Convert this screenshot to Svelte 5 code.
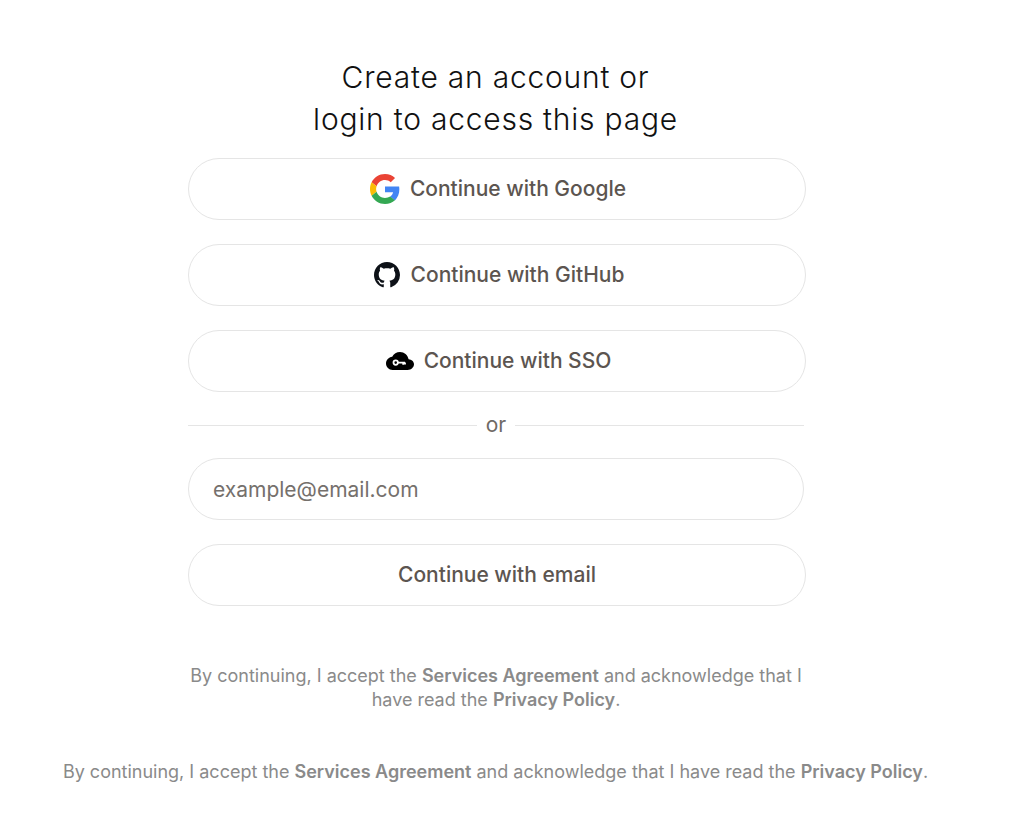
<script>
  const providers = [
    { id: "google", label: "Continue with Google" },
    { id: "github", label: "Continue with GitHub" },
    { id: "sso", label: "Continue with SSO" },
  ];
</script>

<main class="page">
  <section class="panel">
    <h1>Create an account or<br />login to access this page</h1>

    <div class="form">
      {#each providers as p}
        <button class="btn" type="button">
          {#if p.id === "google"}
            <svg class="icon google" viewBox="0 0 48 48" aria-hidden="true">
              <path fill="#EA4335" d="M24 9.5c3.54 0 6.71 1.22 9.21 3.6l6.85-6.85C35.9 2.38 30.47 0 24 0 14.62 0 6.51 5.38 2.56 13.22l7.98 6.19C12.43 13.72 17.74 9.5 24 9.5z" />
              <path fill="#4285F4" d="M46.98 24.55c0-1.57-.15-3.09-.38-4.55H24v9.02h12.94c-.58 2.96-2.26 5.48-4.78 7.18l7.73 6c4.51-4.18 7.09-10.36 7.09-17.65z" />
              <path fill="#FBBC05" d="M10.53 28.59c-.48-1.45-.76-2.99-.76-4.59s.27-3.14.76-4.59l-7.98-6.19C.92 16.46 0 20.12 0 24c0 3.88.92 7.54 2.56 10.78l7.97-6.19z" />
              <path fill="#34A853" d="M24 48c6.48 0 11.93-2.13 15.89-5.81l-7.73-6c-2.15 1.45-4.92 2.3-8.16 2.3-6.26 0-11.57-4.22-13.47-9.91l-7.98 6.19C6.51 42.62 14.62 48 24 48z" />
            </svg>
          {:else if p.id === "github"}
            <svg class="icon github" viewBox="0 0 16 16" aria-hidden="true">
              <path fill="#0d1117" d="M8 0C3.58 0 0 3.58 0 8c0 3.54 2.29 6.53 5.47 7.59.4.07.55-.17.55-.38 0-.19-.01-.82-.01-1.49-2.01.37-2.53-.49-2.69-.94-.09-.23-.48-.94-.82-1.13-.28-.15-.68-.52-.01-.53.63-.01 1.08.58 1.23.82.72 1.21 1.87.87 2.33.66.07-.52.28-.87.51-1.07-1.78-.2-3.64-.89-3.64-3.95 0-.87.31-1.59.82-2.15-.08-.2-.36-1.02.08-2.12 0 0 .67-.21 2.2.82.64-.18 1.32-.27 2-.27s1.36.09 2 .27c1.53-1.04 2.2-.82 2.2-.82.44 1.1.16 1.92.08 2.12.51.56.82 1.27.82 2.15 0 3.07-1.87 3.75-3.65 3.95.29.25.54.73.54 1.48 0 1.07-.01 1.93-.01 2.2 0 .21.15.46.55.38A8.01 8.01 0 0 0 16 8c0-4.42-3.58-8-8-8z" />
            </svg>
          {:else}
            <svg class="icon sso" viewBox="0 0 28 18" aria-hidden="true">
              <path fill="#000" d="M22.6 7.2C21.7 3 18.300 0 14 0 10.600 0 7.700 1.900 6.200 4.800 2.700 5.200 0 8.200 0 11.600 0 15.100 2.900 18 6.500 18h15.200c3.500 0 6.300-2.700 6.300-5.700 0-2.700-2.400-4.900-5.400-5.100z" />
              <circle cx="9.700" cy="10.600" r="2.200" fill="none" stroke="#fff" stroke-width="1.800" />
              <path fill="none" stroke="#fff" stroke-width="1.800" d="M11.800 10.600h7.200M17.200 10.600v2.200M19 10.600v1.800" />
            </svg>
          {/if}
          <span class="label">{p.label}</span>
        </button>
      {/each}

      <div class="divider">
        <span class="line"></span>
        <span class="or">or</span>
        <span class="line"></span>
      </div>

      <input class="email" type="email" placeholder="example@email.com" />

      <button class="btn" type="button"><span class="label">Continue with email</span></button>

      <p class="terms inner">
        By continuing, I accept the <b>Services Agreement</b> and acknowledge that I have read the <b>Privacy Policy</b>.
      </p>
    </div>
  </section>

  <p class="terms outer">
    By continuing, I accept the <b>Services Agreement</b> and acknowledge that I have read the <b>Privacy Policy</b>.
  </p>
</main>

<style>
  :global(body) {
    margin: 0;
    background: #fff;
  }

  .page {
    width: 991px;
    height: 840px;
    padding-top: 56px;
    box-sizing: border-box;
    font-family: Inter, "Liberation Sans", sans-serif;
  }

  .panel {
    display: flex;
    flex-direction: column;
    align-items: center;
  }

  h1 {
    margin: 0 0 18px;
    font-family: Inter, "Liberation Sans", sans-serif;
    font-size: 30px;
    font-weight: 300;
    line-height: 42px;
    letter-spacing: 0.77px;
    text-align: center;
    color: #111;
  }

  .form {
    display: flex;
    flex-direction: column;
    width: 616px;
    margin-left: 1px;
  }

  .btn {
    display: flex;
    align-items: center;
    justify-content: center;
    gap: 10px;
    width: 618px;
    height: 62px;
    margin-bottom: 24px;
    padding: 0;
    box-sizing: border-box;
    background: #fff;
    border: 1px solid #e5e5e5;
    border-radius: 31px;
    font-family: inherit;
    font-size: 21px;
    font-weight: 500;
    color: #5c5550;
    cursor: pointer;
  }

  .label {
    margin-bottom: 2px;
  }

  .icon {
    display: block;
    flex: none;
  }

  .google {
    width: 30px;
    height: 30px;
    margin-left: 2px;
  }

  .github {
    width: 26px;
    height: 26px;
    margin: 0 1px 0 4px;
  }

  .sso {
    width: 28px;
    height: 18px;
    margin-left: 3px;
  }

  .divider {
    display: flex;
    align-items: center;
    gap: 9px;
    height: 20px;
    margin: -1px 0 23px;
  }

  .line {
    flex: 1;
    height: 1px;
    background: #e5e5e5;
  }

  .or {
    margin-bottom: 2px;
    font-size: 21px;
    color: #6f6a66;
  }

  .email {
    width: 100%;
    height: 62px;
    margin-bottom: 24px;
    padding: 0 24px;
    box-sizing: border-box;
    background: #fff;
    border: 1px solid #e5e5e5;
    border-radius: 31px;
    font-family: inherit;
    font-size: 21px;
    outline: none;
  }

  .email::placeholder {
    color: #75706c;
    opacity: 1;
  }

  .terms {
    margin: 0;
    font-size: 18px;
    line-height: 24px;
    text-align: center;
    color: #8a8a8a;
  }

  .terms b {
    font-weight: 600;
  }

  .inner {
    margin-top: 34px;
  }

  .outer {
    margin-top: 48px;
  }
</style>
